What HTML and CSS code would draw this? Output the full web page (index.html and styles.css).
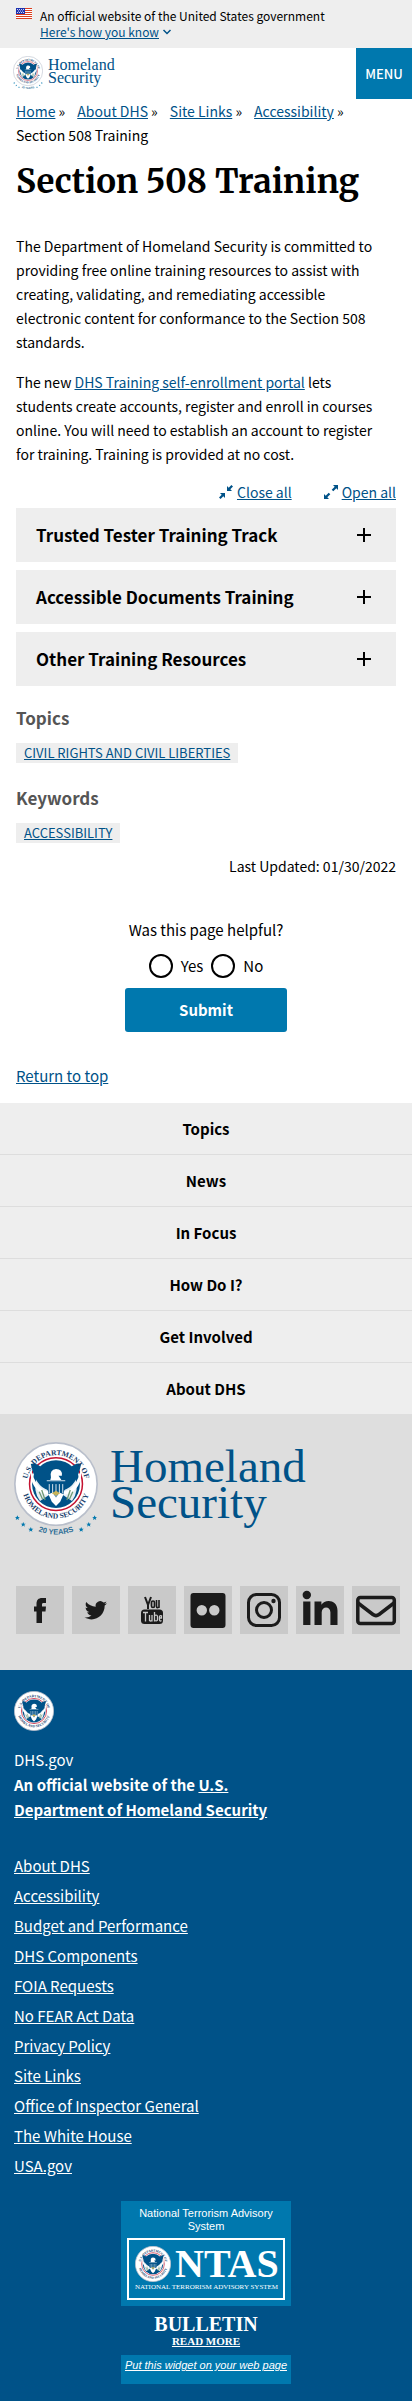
FILE: index.html
```html
<!DOCTYPE html>
<html lang="en">
<head>
<meta charset="utf-8">
<meta name="viewport" content="width=device-width, initial-scale=1">
<title>Section 508 Training | Homeland Security</title>
<link rel="stylesheet" href="styles.css">
</head>
<body id="top">
<svg class="sprite" aria-hidden="true">
  <defs>
    <path id="arc-top" d="M-34.500 0A34.500 34.500 0 0 1 34.500 0"/>
    <path id="arc-bottom" d="M-41 0A41 41 0 0 0 41 0"/>
    <path id="arc-years" d="M-60 0A60 60 0 0 0 60 0"/>
    <path id="star" d="M0-3 .9-.9 3-.9 1.300.5 1.900 2.700 0 1.400-1.900 2.700-1.300.5-3-.9-.9-.9z"/>
    <symbol id="seal" viewBox="-50 -50 100 100">
      <circle r="49" fill="#fff" stroke="#b9bfcb" stroke-width="2"/>
      <circle r="31.500" fill="#fff" stroke="#c41230" stroke-width="1.800"/>
      <circle r="28.500" fill="#005288"/>
      <path d="M-23-7Q-10 6-7 12L-19 20Q-28 8-23-7ZM23-7Q10 6 7 12L19 20Q28 8 23-7Z" fill="#fff" opacity=".9"/>
      <path d="M-30-24Q-23-26-17-19Q-11-12-10-4L-9 7Q-24 4-30-24ZM30-24Q23-26 17-19Q11-12 10-4L9 7Q24 4 30-24Z" fill="#005288"/>
      <path d="M-30-19Q-24 7-8 9L-8 13Q-28 10-30-10ZM30-19Q24 7 8 9L8 13Q28 10 30-10Z" fill="#fff"/>
      <path d="M-6-8Q-8-17 0-18Q8-18 7-10L3-10 7-4-7-4Z" fill="#fff"/>
      <path d="M-11-5H11L9 12 0 17-9 12Z" fill="#005288"/>
      <path d="M-11-4H11M-8 0V11M-4 0V14M0 0V15M4 0V14M8 0V11" stroke="#fff" stroke-width="1" fill="none"/>
      <path d="M-9 12-4 10 0 16 4 10 9 12 5 21 0 26-5 21Z" fill="#fff"/>
      <path d="M-5 11 0 8 5 11 0 14Z" fill="#c9b458"/>
      <path d="M-20 9-16 18M-17 7-13 19M20 9 16 18M17 7 13 19" stroke="#6d9a73" stroke-width="1.500"/>
      <g class="seal-text">
        <text><textPath href="#arc-top" startOffset="50%">U.S. DEPARTMENT OF</textPath></text>
        <text><textPath href="#arc-bottom" startOffset="50%">HOMELAND SECURITY</textPath></text>
      </g>
    </symbol>
    <symbol id="seal-years" viewBox="-50 -50 100 120">
      <use href="#seal" x="-50" y="-50" width="100" height="100"/>
      <g fill="#0078ae">
        <use href="#star" x="-46" y="40"/><use href="#star" x="-39" y="48"/><use href="#star" x="-30" y="54"/>
        <use href="#star" x="46" y="40"/><use href="#star" x="39" y="48"/><use href="#star" x="30" y="54"/>
      </g>
      <text class="years-text"><textPath href="#arc-years" startOffset="50%">20 YEARS</textPath></text>
    </symbol>
    <symbol id="plus" viewBox="0 0 16 16"><path d="M8 1v14M1 8h14" stroke="#000" stroke-width="2"/></symbol>
  </defs>
</svg>

<section class="banner" aria-label="Official government website">
  <svg class="flag" viewBox="0 0 16 11" aria-hidden="true">
    <path fill="#fff" d="M0 0h16v11H0z"/>
    <path d="M0 .5h16M0 2.500h16M0 4.500h16M0 6.500h16M0 8.500h16M0 10.500h16" stroke="#db3e1f"/>
    <path fill="#1e33b1" d="M0 0h9v6H0z"/>
    <path d="M1 1.500h7M2 3h6M1 4.500h7" stroke="#fff" stroke-width=".8" stroke-dasharray="1 1"/>
  </svg>
  <div>
    <p>An official website of the United States government</p>
    <button class="banner-toggle" type="button"><span>Here's how you know</span>
      <svg viewBox="0 0 10 10" aria-hidden="true"><path d="m1.500 3 3.500 3.500L8.500 3" fill="none" stroke="#005288" stroke-width="1.500"/></svg>
    </button>
  </div>
</section>

<header class="header">
  <a class="logo" href="#top">
    <svg class="logo-seal" aria-hidden="true"><use href="#seal-years"/></svg>
    <span class="logo-name">Homeland<br>Security</span>
  </a>
  <button class="menu" type="button">MENU</button>
</header>

<main class="main">
  <nav aria-label="Breadcrumb">
    <ol class="crumbs">
      <li><a href="#">Home</a></li><li><a href="#">About DHS</a></li><li><a href="#">Site Links</a></li><li><a href="#">Accessibility</a></li><li>Section 508 Training</li>
    </ol>
  </nav>
  <h1>Section 508 Training</h1>
  <p class="copy">The Department of Homeland Security is committed to providing free online training resources to assist with creating, validating, and remediating accessible electronic content for conformance to the Section 508 standards.</p>
  <p class="copy">The new <a href="#">DHS Training self-enrollment portal</a> lets students create accounts, register and enroll in courses online. You will need to establish an account to register for training. Training is provided at no cost.</p>

  <div class="expanders">
    <button type="button">
      <svg viewBox="0 0 14 14" aria-hidden="true"><path d="M8 1v5h5l-1.700-1.700L14 1.600 12.400 0 9.700 2.700zM6 13V8H1l1.700 1.700L0 12.400 1.600 14l2.700-2.700z" fill="#005288"/></svg>
      <span>Close all</span></button>
    <button type="button">
      <svg viewBox="0 0 14 14" aria-hidden="true"><path d="M14 0v5l-1.700-1.700-3 3-1.600-1.600 3-3L9 0zM0 14V9l1.700 1.700 3-3 1.600 1.600-3 3L5 14z" fill="#005288"/></svg>
      <span>Open all</span></button>
  </div>
  <div class="accordion">
    <h2><button type="button" aria-expanded="false">Trusted Tester Training Track<svg aria-hidden="true"><use href="#plus"/></svg></button></h2>
    <h2><button type="button" aria-expanded="false">Accessible Documents Training<svg aria-hidden="true"><use href="#plus"/></svg></button></h2>
    <h2><button type="button" aria-expanded="false">Other Training Resources<svg aria-hidden="true"><use href="#plus"/></svg></button></h2>
  </div>

  <section class="tags"><h3>Topics</h3><a href="#">CIVIL RIGHTS AND CIVIL LIBERTIES</a></section>
  <section class="tags"><h3>Keywords</h3><a href="#">ACCESSIBILITY</a></section>
  <p class="updated">Last Updated: 01/30/2022</p>

  <form class="survey">
    <fieldset>
      <legend>Was this page helpful?</legend>
      <label><input type="radio" name="helpful" value="yes">Yes</label>
      <label><input type="radio" name="helpful" value="no">No</label>
    </fieldset>
    <button type="button">Submit</button>
  </form>
  <a class="return" href="#top">Return to top</a>
</main>

<footer>
  <nav class="footer-nav" aria-label="Footer">
    <a href="#">Topics</a><a href="#">News</a><a href="#">In Focus</a><a href="#">How Do I?</a><a href="#">Get Involved</a><a href="#">About DHS</a>
  </nav>
  <section class="agency">
    <div class="logo logo-large">
      <svg class="logo-seal" aria-hidden="true"><use href="#seal-years"/></svg>
      <span class="logo-name">Homeland<br>Security</span>
    </div>
    <div class="social">
      <a href="#" aria-label="Facebook"><svg viewBox="0 0 48 48"><path d="M20.500 37V25.500H18V20.500h2.500V18c0-4 1.800-6 5.700-6H30v5h-2.200c-1.500 0-1.800.6-1.800 1.800v1.700h4l-.5 5H26V37z"/></svg></a>
      <a href="#" aria-label="Twitter"><svg viewBox="0 0 48 48"><path d="M35 17.300c-.8.4-1.700.6-2.600.7.900-.6 1.600-1.400 2-2.500-.9.500-1.900.9-2.900 1.100a4.600 4.600 0 0 0-7.800 4.200c-3.800-.2-7.100-2-9.400-4.800-1.200 2-.7 4.700 1.400 6.100-.7 0-1.500-.2-2.100-.6 0 2.200 1.500 4.200 3.700 4.600-.7.200-1.400.2-2.100.1.600 1.800 2.300 3.200 4.300 3.200A9.200 9.200 0 0 1 12.500 31.300c9.400 5.700 20.200-.9 20.200-11.700.9-.6 1.700-1.400 2.300-2.300z"/></svg></a>
      <a href="#" aria-label="YouTube"><svg viewBox="0 0 48 48"><path d="m17 11 3 8v4M23 11l-3 8" fill="none" stroke="#1b1b1b" stroke-width="2"/><rect x="23.500" y="15" width="3" height="6.500" rx="1.500" fill="none" stroke="#1b1b1b" stroke-width="1.700"/><path d="M28.500 14v6.500q0 2 2.500.5V14v8" fill="none" stroke="#1b1b1b" stroke-width="1.600"/><rect x="13" y="23.500" width="22" height="14.500" rx="3.500"/><path d="M15 26.500h5M17.500 26.500v9M21.500 29v5.500q1 1 2.500 0V29v6.500M26.500 26v9.500M26.500 29.500q3-1 3 1v3q0 2-3 1M33.500 34.500q-2 1.500-2-1v-2.500q0-2 2-1.200v2.200h-2" fill="none" stroke="#c9c9c9" stroke-width="1.300"/></svg></a>
      <a href="#" aria-label="Flickr"><svg viewBox="0 0 48 48"><path fill-rule="evenodd" d="M9.500 7h29a3 3 0 0 1 3 3v29a3 3 0 0 1-3 3h-29a3 3 0 0 1-3-3V10a3 3 0 0 1 3-3zm8.300 12a5.200 5.200 0 1 0 0 10.400 5.200 5.200 0 0 0 0-10.400zm12.500 0a5.200 5.200 0 1 0 0 10.400 5.200 5.200 0 0 0 0-10.400z"/></svg></a>
      <a href="#" aria-label="Instagram"><svg viewBox="0 0 48 48"><g fill="none" stroke="#1b1b1b" stroke-width="3"><rect x="8.500" y="8.500" width="31" height="31" rx="8"/><circle cx="24" cy="24" r="7.500"/></g><circle cx="33.500" cy="15" r="2.200"/></svg></a>
      <a href="#" aria-label="LinkedIn"><svg viewBox="0 0 48 48"><circle cx="10.800" cy="9" r="4.200"/><path d="M7.200 15.500h7.200V39H7.200zM18.500 15.500h6.900v3.200c3.200-5.700 16.100-5.700 16.100 5.900V39h-7.100V26.300c0-6.700-8.700-6.400-8.700 0V39h-7.200z"/></svg></a>
      <a href="#" aria-label="Email"><svg viewBox="0 0 48 48"><g fill="none" stroke="#1b1b1b" stroke-width="3.500"><rect x="5.800" y="11.500" width="36.500" height="26" rx="2.500"/><path d="m6 17 15 11.500q3 2.200 6 0L42 17"/></g></svg></a>
    </div>
  </section>
  <section class="identifier">
    <svg class="identifier-seal" aria-hidden="true"><use href="#seal"/></svg>
    <p>DHS.gov</p>
    <p class="official">An official website of the <a href="#">U.S. Department of Homeland Security</a></p>
    <ul>
      <li><a href="#">About DHS</a></li>
      <li><a href="#">Accessibility</a></li>
      <li><a href="#">Budget and Performance</a></li>
      <li><a href="#">DHS Components</a></li>
      <li><a href="#">FOIA Requests</a></li>
      <li><a href="#">No FEAR Act Data</a></li>
      <li><a href="#">Privacy Policy</a></li>
      <li><a href="#">Site Links</a></li>
      <li><a href="#">Office of Inspector General</a></li>
      <li><a href="#">The White House</a></li>
      <li><a href="#">USA.gov</a></li>
    </ul>
    <aside class="ntas">
      <div class="ntas-top">
        <p>National Terrorism Advisory System</p>
        <div class="ntas-box">
          <div class="ntas-mark"><svg aria-hidden="true"><use href="#seal"/></svg><span>NTAS</span></div>
          <small>NATIONAL TERRORISM ADVISORY SYSTEM</small>
        </div>
      </div>
      <div class="ntas-bulletin"><strong>BULLETIN</strong><a href="#">READ MORE</a></div>
      <a class="ntas-embed" href="#">Put this widget on your web page</a>
    </aside>
  </section>
</footer>
</body>
</html>
```
FILE: styles.css
```css
* { box-sizing: border-box; }

body {
  margin: 0;
  background: #fff;
  color: #000;
  font: 15px/24px "Source Sans Pro", "Noto Sans CJK SC", sans-serif;
}

h1, h2, h3, p, ul, ol, fieldset { margin: 0; padding: 0; }
ul, ol { list-style: none; }
a { color: #005288; }
button { font: inherit; border: 0; padding: 0; background: none; cursor: pointer; }
svg { display: block; flex: none; }

.sprite { position: absolute; width: 0; height: 0; }
.seal-text { fill: #17406d; font: bold 9px "Liberation Serif", serif; text-anchor: middle; }
.years-text { fill: #2f6f96; font: bold 9px "Liberation Sans", sans-serif; text-anchor: middle; }

.banner {
  display: flex;
  gap: 8px;
  padding: 8px 16px;
  background: #eee;
  font-size: 12px;
  line-height: 16px;
}
.flag { width: 16px; height: 11px; }
.banner-toggle { display: flex; align-items: center; gap: 3px; color: #005288; }
.banner-toggle span { text-decoration: underline; }
.banner-toggle svg { width: 10px; height: 10px; }

.header { display: flex; justify-content: space-between; }
.logo { display: flex; align-items: flex-start; gap: 5px; padding: 8px 13px 0; color: #005288; text-decoration: none; }
.logo-seal { width: 30px; height: 36px; }
.logo-name { padding-top: 2px; font: 16px/13px "Liberation Serif", serif; }
.menu { width: 56px; height: 51px; background: #0078ae; color: #fff; font-size: 13px; font-weight: 500; }

.main { padding: 0 16px; }
.crumbs { display: flex; flex-wrap: wrap; column-gap: 12px; font-size: 14px; }
.crumbs li:not(:last-child)::after { content: " »"; }
h1 { padding: 13px 0 31px; font: bold 33px/43px "Merriweather", "DejaVu Serif Condensed", "DejaVu Serif", serif; white-space: nowrap; }
.copy { margin-bottom: 16px; padding-right: 12px; font-size: 14px; }

.expanders { display: flex; justify-content: flex-end; gap: 32px; margin-bottom: 6px; }
.expanders button { display: flex; align-items: center; gap: 4px; color: #005288; font-size: 14px; line-height: 20px; }
.expanders span { text-decoration: underline; }
.expanders svg { width: 14px; height: 14px; }

.accordion { display: grid; gap: 8px; }
.accordion button {
  display: flex;
  align-items: center;
  justify-content: space-between;
  width: 100%;
  height: 54px;
  padding: 0 24px 0 20px;
  background: #eee;
  color: #000;
  font-size: 17px;
  font-weight: bold;
}
.accordion svg { width: 16px; height: 16px; }

.tags { padding-top: 20px; }
.tags h3 { margin-bottom: 13px; color: #555; font-size: 17px; }
.tags a { display: table; padding: 0 8px; background: #eee; font-size: 13px; line-height: 20px; }
.tags + .tags { padding-top: 23px; }
.updated { padding-top: 11px; font-size: 14px; text-align: right; }

.survey { display: flex; flex-direction: column; align-items: center; gap: 10px; padding-top: 40px; }
.survey fieldset { display: flex; flex-wrap: wrap; justify-content: center; gap: 8px; border: 0; }
.survey legend { padding: 0 0 12px; }
.survey label { display: flex; align-items: center; gap: 8px; }
.survey input { appearance: none; width: 24px; height: 24px; margin: 0; border: 2px solid #000; border-radius: 50%; }
.survey input:checked { background: #005288; box-shadow: inset 0 0 0 3px #fff; }
.survey button { width: 162px; height: 44px; border-radius: 3px; background: #0078ae; color: #fff; font-weight: bold; }
.return { display: inline-block; margin: 32px 0 15px; }

.footer-nav { display: grid; background: #eee; }
.footer-nav a { padding: 14px 16px 13px; color: #000; font-weight: bold; text-align: center; text-decoration: none; }
.footer-nav a + a { border-top: 1px solid #ddd; }

.agency { padding: 28px 12px 36px; background: #dedede; }
.logo-large { gap: 12px; padding: 0 2px; }
.logo-large .logo-seal { width: 84px; height: 101px; }
.logo-large .logo-name { padding-top: 6px; font-size: 47px; line-height: 36px; }
.social { display: grid; grid-template-columns: repeat(7, 48px); gap: 8px; padding: 43px 4px 0; }
.social a { background: #c9c9c9; }
.social svg { width: 48px; height: 48px; fill: #1b1b1b; }

.identifier { padding: 21px 14px 18px; background: #005288; color: #fff; line-height: 25px; }
.identifier a { color: #fff; }
.identifier-seal { width: 40px; height: 40px; margin-bottom: 16px; }
.official { max-width: 272px; font-weight: bold; }
.identifier ul { padding: 29px 0 20px; line-height: 30px; }

.ntas { width: 170px; margin: 0 auto; text-align: center; }
.ntas-top { padding: 6px; background: #0078ae; font: 11px/13px "Liberation Sans", sans-serif; }
.ntas-top p { padding: 0 8px; }
.ntas-box { margin-top: 5px; padding: 6px; border: 2px solid #fff; }
.ntas-mark { display: flex; align-items: center; gap: 4px; }
.ntas-mark svg { width: 36px; height: 36px; }
.ntas-mark span { font: bold 40px/36px "Liberation Serif", serif; }
.ntas-box small { display: block; font: 7px/10px "Liberation Serif", serif; white-space: nowrap; }
.ntas-bulletin { display: grid; padding: 8px 0 6px; font: bold 11px/15px "Liberation Serif", serif; }
.ntas-bulletin strong { font-size: 20px; line-height: 20px; }
.ntas-embed { display: block; padding: 4px 0 12px; background: #0078ae; font: italic 11px/13px "Liberation Sans", sans-serif; white-space: nowrap; }
```
